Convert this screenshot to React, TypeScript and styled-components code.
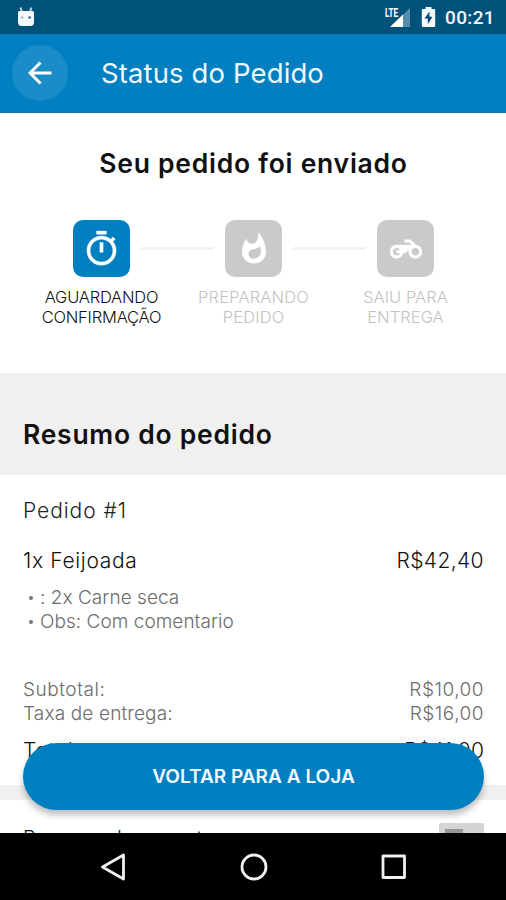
import React from "react";
import styled, { createGlobalStyle } from "styled-components";

const BLUE = "#0080c1";

const GlobalStyle = createGlobalStyle`
  * { box-sizing: border-box; }
  body { margin: 0; background: #fff; }
`;

const Screen = styled.div`
  display: flex;
  flex-direction: column;
  width: 506px;
  height: 900px;
  overflow: hidden;
  background: #fff;
  color: #111;
  font-family: Inter, Roboto, sans-serif;
  white-space: nowrap;
`;

const StatusBar = styled.div`
  display: flex;
  align-items: center;
  flex: 0 0 34px;
  padding: 0 11px 0 17px;
  background: #00527a;
`;

const StatusIcons = styled.div`
  display: flex;
  align-items: center;
  gap: 11px;
  margin-left: auto;
`;

const Clock = styled.span`
  margin-left: -2px;
  padding-top: 2px;
  font: 500 19px/24px Roboto, sans-serif;
  letter-spacing: 0.35px;
  color: #f2f8fb;
`;

const AppBar = styled.header`
  display: flex;
  align-items: center;
  flex: 0 0 79px;
  padding: 0 12px;
  background: ${BLUE};
  border-bottom: 1px solid #1673b0;
`;

const BackButton = styled.button`
  display: grid;
  place-items: center;
  width: 56px;
  height: 56px;
  padding: 0;
  border: 0;
  border-radius: 50%;
  background: #1a8cc8;
`;

const Title = styled.h1`
  margin: 0 0 0 33px;
  font-size: 27.5px;
  font-weight: 400;
  line-height: 32px;
  letter-spacing: 0.12px;
  color: #eef8fe;
`;

const Body = styled.main`
  position: relative;
  flex: 1 1 0;
  min-height: 0;
  overflow: hidden;
`;

const Progress = styled.section`
  height: 260px;
  padding-top: 34px;
`;

const Heading = styled.h2`
  margin: 0;
  font-size: 26.5px;
  font-weight: 600;
  line-height: 32px;
  letter-spacing: 0.74px;
`;

const CenteredHeading = styled(Heading)`
  padding-left: 1px;
  text-align: center;
`;

const Track = styled.div`
  display: flex;
  align-items: center;
  justify-content: center;
  gap: 11px;
  margin-top: 41px;
  padding-left: 1px;
`;

const Tile = styled.div<{ $active?: boolean }>`
  display: grid;
  place-items: center;
  width: 57px;
  height: 57px;
  border-radius: 10px;
  background: ${(p) => (p.$active ? BLUE : "#cacaca")};
`;

const Connector = styled.div`
  width: 73px;
  height: 3px;
  background: #f3f3f3;
`;

const Labels = styled.div`
  display: grid;
  grid-template-columns: repeat(3, 152px);
  justify-content: center;
  margin-top: 10px;
  padding-left: 1px;
`;

const Label = styled.div<{ $active?: boolean; $spacing: number }>`
  font-size: 16.5px;
  font-weight: 300;
  line-height: 20px;
  letter-spacing: ${(p) => p.$spacing}px;
  text-align: center;
  color: ${(p) => (p.$active ? "#111" : "#c2c2c2")};
`;

const SummaryBand = styled.div`
  height: 102px;
  padding: 45px 23px 0;
  background: #f0f0f0;
`;

const Order = styled.section`
  display: flex;
  flex-direction: column;
  height: 310px;
  padding: 24px 22px 0 23px;
`;

const OrderNumber = styled.div`
  font-size: 21px;
  font-weight: 300;
  line-height: 24px;
  letter-spacing: 0.95px;
  color: #222;
`;

const Line = styled.div<{ $size: "large" | "small" }>`
  display: flex;
  justify-content: space-between;
  font-size: ${(p) => (p.$size === "large" ? 21 : 19)}px;
  font-weight: 300;
  line-height: 24px;
  letter-spacing: ${(p) => (p.$size === "large" ? 0.65 : 0.15)}px;
  color: ${(p) => (p.$size === "large" ? "#111" : "#6c6c6c")};
`;

const ItemLine = styled(Line)`
  margin-top: 26px;
`;

const Notes = styled.ul`
  margin: 13px 0 0;
  padding: 0 0 0 6px;
  list-style: none;
`;

const Note = styled.li`
  display: flex;
  align-items: center;
  gap: 7px;
  font-size: 19px;
  font-weight: 300;
  line-height: 24px;
  letter-spacing: 0.04px;
  color: #6c6c6c;

  &::before {
    content: "";
    width: 4px;
    height: 4px;
    border-radius: 50%;
    background: #777;
  }
`;

const Totals = styled.div`
  margin-top: 44px;
`;

const Caption = styled.span<{ $spacing: number }>`
  letter-spacing: ${(p) => p.$spacing}px;
`;

const Amount = styled.span<{ $spacing?: number }>`
  letter-spacing: ${(p) => p.$spacing ?? 0.5}px;
`;

const GrandTotal = styled(Line)`
  margin-top: 13px;
`;

const Divider = styled.div`
  height: 15px;
  background: #f0f0f0;
`;

const Option = styled.div`
  display: flex;
  justify-content: space-between;
  padding: 23px 22px 0 23px;
  font-size: 20px;
  font-weight: 300;
  line-height: 30px;
  letter-spacing: -0.15px;
`;

const Toggle = styled.div`
  width: 45px;
  height: 26px;
  padding: 6px;
  border-radius: 2px;
  background: #d4d4d4;

  &::before {
    content: "";
    display: block;
    width: 18px;
    height: 14px;
    background: #979797;
  }
`;

const ReturnButton = styled.button`
  position: absolute;
  left: 23px;
  right: 22px;
  bottom: 23px;
  height: 67px;
  padding: 0;
  border: 0;
  border-radius: 34px;
  background: ${BLUE};
  box-shadow: 0 5px 6px rgba(0, 0, 0, 0.26);
  font: 600 19px/25px Inter, sans-serif;
  letter-spacing: 0.03px;
  color: #f4faff;
`;

const NavBar = styled.nav`
  display: flex;
  align-items: center;
  justify-content: space-between;
  flex: 0 0 67px;
  padding: 0 98px 0 99px;
  background: #000;
`;

const MascotIcon = () => (
  <svg width="18" height="21" viewBox="0 0 18 21" fill="#f5fafc">
    <path d="M3.500 .500 5 5M14.400 .500 13 5" stroke="#bcd2dd" strokeWidth="2" />
    <path d="M2.500 4h13Q17 4 17 5.500V15Q17 19 13.500 19H4.500Q1 19 1 15V5.500Q1 4 2.500 4Z" />
    <circle cx="5.300" cy="10.500" r="1" fill="#7599ab" />
    <circle cx="12.600" cy="10.500" r="1.200" fill="#1d5f82" />
  </svg>
);

const SignalIcon = () => (
  <svg width="26" height="22" viewBox="0 0 26 22">
    <path d="M26 2V21H6Z" fill="#5490ae" />
    <path d="M19 8.500V21H6Z" fill="#fff" />
    <text x="1" y="10.500" fontFamily="Roboto, sans-serif" fontWeight="700" fontSize="12" textLength="13" lengthAdjust="spacingAndGlyphs" fill="#fff">LTE</text>
  </svg>
);

const BatteryIcon = () => (
  <svg width="15" height="22" viewBox="0 0 15 22">
    <path d="M4.500 1h6v2H13q1.200 0 1.200 1.200V19.800Q14.200 21 13 21H2Q.800 21 .800 19.800V4.200Q.800 3 2 3h2.500Z" fill="#f5fafc" />
    <path d="M8.500 5.500 3.500 12.500H6.800V18L11.500 10.700H8.500Z" fill="#004a72" />
  </svg>
);

const BackArrow = () => (
  <svg width="24" height="24" viewBox="0 0 24 24" fill="none" stroke="#fff" strokeWidth="3">
    <path d="M23.500 12H2.500M12.500 1.500 2 12 12.500 22.500" />
  </svg>
);

const TimerIcon = () => (
  <svg width="39" height="39" viewBox="0 -0.300 24 24" fill="#fff" stroke="#fff" strokeWidth="0.250">
    <path d="M15 1H9v2h6V1zm-4 13h2V8h-2v6zm8.030-6.610 1.420-1.420c-.430-.510-.900-.990-1.410-1.410l-1.420 1.420C16.070 4.740 14.120 4 12 4c-4.970 0-9 4.030-9 9s4.020 9 9 9 9-4.030 9-9c0-2.120-.740-4.070-1.970-5.610zM12 20c-3.870 0-7-3.130-7-7s3.130-7 7-7 7 3.130 7 7-3.130 7-7 7z" />
  </svg>
);

const FlameIcon = () => (
  <svg width="36" height="36" viewBox="0 0 24 24" fill="#fff">
    <path d="M14.800 1C15.100 4 14.300 7.800 11.200 8.500 9 8.700 7.300 7.500 7 5.200 5 7.700 4 10.800 4 14c0 4.420 3.580 7.600 8 7.600s8-3.180 8-7.600C20 9.500 18.300 4.500 14.800 1zM11.710 18.500c-1.900 0-3.420-1.300-3.420-3.040 0-1.720 1.150-2.860 2.910-3.220 1.870-.360 3.700-.900 4.720-2.280.390 1.290.690 2.350.690 3.740 0 2.650-2.250 4.800-4.900 4.800z" />
  </svg>
);

const MotorcycleIcon = () => (
  <svg width="32" height="32" viewBox="0 0 24 24" fill="#fff" stroke="#fff" strokeWidth="0.300">
    <path d="M19.440 9.030 15.410 5H11v2h3.590l2 2H5c-2.800 0-5 2.200-5 5s2.200 5 5 5c2.460 0 4.450-1.690 4.900-4h1.650l2.770-2.770c-.210.540-.320 1.140-.320 1.770 0 2.800 2.200 5 5 5s5-2.200 5-5c0-2.650-1.970-4.770-4.560-4.970zM7.820 15C7.400 16.150 6.280 17 5 17c-1.630 0-3-1.370-3-3s1.370-3 3-3c1.280 0 2.400.850 2.820 2H5v2h2.820zM19 17c-1.660 0-3-1.340-3-3s1.340-3 3-3 3 1.340 3 3-1.340 3-3 3z" />
  </svg>
);

const NavIcon = ({ children }: { children: React.ReactNode }) => (
  <svg width="28" height="28" viewBox="0 0 28 28" fill="none" stroke="#f0f0f0" strokeWidth="2.800" strokeLinejoin="round">
    {children}
  </svg>
);

export default function App() {
  return (
    <Screen>
      <GlobalStyle />
      <StatusBar>
        <MascotIcon />
        <StatusIcons>
          <SignalIcon />
          <BatteryIcon />
          <Clock>00:21</Clock>
        </StatusIcons>
      </StatusBar>
      <AppBar>
        <BackButton aria-label="Voltar">
          <BackArrow />
        </BackButton>
        <Title>Status do Pedido</Title>
      </AppBar>
      <Body>
        <Progress>
          <CenteredHeading>Seu pedido foi enviado</CenteredHeading>
          <Track>
            <Tile $active>
              <TimerIcon />
            </Tile>
            <Connector />
            <Tile>
              <FlameIcon />
            </Tile>
            <Connector />
            <Tile>
              <MotorcycleIcon />
            </Tile>
          </Track>
          <Labels>
            <Label $active $spacing={-0.2}>AGUARDANDO<br />CONFIRMAÇÃO</Label>
            <Label $spacing={0.15}>PREPARANDO<br />PEDIDO</Label>
            <Label $spacing={0.05}>SAIU PARA<br />ENTREGA</Label>
          </Labels>
        </Progress>
        <SummaryBand>
          <Heading>Resumo do pedido</Heading>
        </SummaryBand>
        <Order>
          <OrderNumber>Pedido #1</OrderNumber>
          <ItemLine $size="large">
            <span>1x Feijoada</span>
            <Amount $spacing={0.4}>R$42,40</Amount>
          </ItemLine>
          <Notes>
            <Note>: 2x Carne seca</Note>
            <Note>Obs: Com comentario</Note>
          </Notes>
          <Totals>
            <Line $size="small">
              <Caption $spacing={0.55}>Subtotal:</Caption>
              <Amount>R$10,00</Amount>
            </Line>
            <Line $size="small">
              <Caption $spacing={0.15}>Taxa de entrega:</Caption>
              <Amount>R$16,00</Amount>
            </Line>
            <GrandTotal $size="large">
              <span>Total:</span>
              <Amount $spacing={0.1}>R$41,00</Amount>
            </GrandTotal>
          </Totals>
        </Order>
        <Divider />
        <Option>
          <span>Remover documento</span>
          <Toggle />
        </Option>
        <ReturnButton>VOLTAR PARA A LOJA</ReturnButton>
      </Body>
      <NavBar>
        <NavIcon>
          <path d="M24.500 2V26L3.500 14Z" />
        </NavIcon>
        <NavIcon>
          <circle cx="14" cy="14" r="12" />
        </NavIcon>
        <NavIcon>
          <rect x="3" y="3" width="21.500" height="21.500" />
        </NavIcon>
      </NavBar>
    </Screen>
  );
}
